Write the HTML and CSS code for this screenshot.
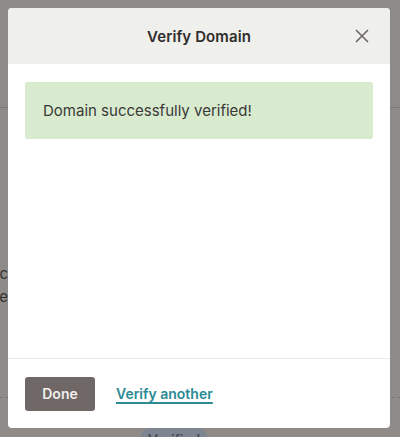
FILE: index.html
```html
<!DOCTYPE html>
<html>
<head>
<meta charset="utf-8">
<link rel="stylesheet" href="styles.css">
</head>
<body>
<div class="page">
  <div class="page-rule"></div>
  <div class="page-text">
    <p>Domain c</p>
    <p>we</p>
  </div>
  <div class="page-dash"></div>
  <div class="badge-row"><span class="badge">Verified</span></div>
</div>
<div class="overlay">
  <div class="modal">
    <div class="modal-header">
      <h2 class="modal-title">Verify Domain</h2>
      <button class="close" aria-label="Close">
        <svg width="14" height="14" viewBox="0 0 14 14"><path d="M1 1 L13 13 M13 1 L1 13" stroke="#6b6766" stroke-width="1.6" fill="none"/></svg>
      </button>
    </div>
    <div class="modal-body">
      <div class="alert">Domain successfully verified!</div>
    </div>
    <div class="modal-footer">
      <button class="btn-done">Done</button>
      <a class="link" href="#">Verify another</a>
    </div>
  </div>
</div>
</body>
</html>
```

FILE: styles.css
```css
* { box-sizing: border-box; }
html, body { margin: 0; padding: 0; }
body {
  width: 400px;
  height: 437px;
  overflow: hidden;
  background: #8f8b88;
  font-family: Inter, "Noto Sans", sans-serif;
  position: relative;
}
.page {
  height: 437px;
  display: flex;
  flex-direction: column;
}
.page-rule {
  margin-top: 107px;
  height: 1px;
  flex: none;
  background: #7c7875;
}
.page-text {
  margin-top: 154px;
  margin-left: -92px;
  width: 100px;
  text-align: right;
  font-size: 15px;
  color: #34312f;
  line-height: 23px;
  flex: none;
}
.page-text p { margin: 0; }
.page-dash {
  margin-top: 89px;
  flex: none;
  border-top: 1px dashed #7b7572;
}
.badge-row {
  margin-top: 30px;
  padding-left: 140px;
  flex: none;
}
.badge {
  display: inline-block;
  background: #7d8591;
  color: #3f444b;
  border-radius: 12px;
  padding: 3px 8px;
  font-size: 14px;
  font-weight: 500;
}
.overlay {
  position: absolute;
  inset: 0;
  padding: 8px 10px 9px 8px;
}
.modal {
  height: 420px;
  background: #fff;
  border-radius: 4px;
  overflow: hidden;
  display: flex;
  flex-direction: column;
}
.modal-header {
  height: 56px;
  flex: none;
  background: #efefeb;
  display: flex;
  align-items: center;
  justify-content: center;
  position: relative;
}
.modal-title {
  margin: 0;
  font-size: 15px;
  font-weight: 600;
  color: #2f2d2c;
  letter-spacing: 0.1px;
}
.close {
  position: absolute;
  right: 21px;
  top: 21px;
  width: 14px;
  height: 14px;
  padding: 0;
  border: 0;
  background: none;
  display: flex;
}
.modal-body {
  flex: 1;
  padding: 18px 17px;
  border-bottom: 1px solid #e9e8e6;
}
.alert {
  height: 57px;
  background: #d8ebcf;
  border-radius: 2px;
  display: flex;
  align-items: center;
  padding-left: 18px;
  font-size: 15px;
  color: #3b3937;
}
.modal-footer {
  height: 69px;
  flex: none;
  display: flex;
  align-items: center;
  padding-left: 17px;
  gap: 21px;
}
.btn-done {
  width: 70px;
  height: 34px;
  border: 0;
  border-radius: 3px;
  background: #6f6866;
  color: #f1efee;
  font-family: Inter, "Noto Sans", sans-serif;
  font-size: 14px;
  font-weight: 600;
  padding: 0;
}
.link {
  color: #2b8b95;
  font-size: 14px;
  font-weight: 600;
  text-decoration: underline;
  text-underline-offset: 3px;
  text-decoration-thickness: 1.5px;
}
```
